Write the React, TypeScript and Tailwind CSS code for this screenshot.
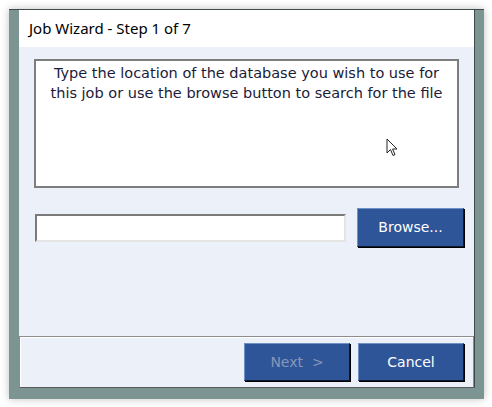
const font = { fontFamily: '"DejaVu Sans", Verdana, sans-serif' };

const BlueButton = ({ text, disabled }: { text: string; disabled?: boolean }) => (
  <button
    className={
      "h-[38px] w-[106px] bg-[#2e5597] border border-t-[#6f8fc7] border-l-[#6f8fc7] border-r-[#0d1a33] border-b-[#0d1a33] shadow-[1px_1px_0_#000] text-[14px] whitespace-pre " +
      (disabled ? "text-[#8797b8]" : "text-white")
    }
    style={font}
  >
    {text}
  </button>
);

const Cursor = () => (
  <svg width="13" height="20" viewBox="0 0 13 20" className="absolute left-[386px] top-[138px]">
    <path
      d="M1 1 L1 15 L4.5 11.5 L7 17.5 L9 16.6 L6.6 11 L11 11 Z"
      fill="#fff"
      stroke="#222"
      strokeWidth="1"
      strokeLinejoin="round"
    />
  </svg>
);

export default function App() {
  return (
    <div className="relative w-[492px] h-[407px] bg-white p-[9px]">
      <div className="w-[475px] h-[390px] flex flex-col bg-[#7c9593] border-t border-t-[#3f4a4a] pl-[10px] pr-[9px] pb-[11px] shadow-[0_0_8px_rgba(0,0,0,0.25)]">
        <div className="flex flex-col flex-1 border-r border-[#404848]">
          <div className="h-[37px] bg-white flex items-center pl-[10px] text-[15px] text-black" style={{ fontFamily: '"Noto Sans", "Open Sans", sans-serif' }}>
            Job Wizard - Step 1 of 7
          </div>
          <div className="flex-1 bg-[#ecf0f8] flex flex-col">
            <div className="mt-[12px] ml-[15px] w-[425px] h-[129px] bg-white border-2 border-[#7d7d7d] pt-[2px] text-center text-[14.5px] leading-[20px] text-[#1b1b3a]" style={font}>
              Type the location of the database you wish to use for
              <br />
              this job or use the browse button to search for the file
            </div>
            <div className="mt-[20px] ml-[16px] flex items-center gap-[11px]">
              <input
                className="w-[311px] h-[28px] bg-white border-2 border-t-[#7a7a7a] border-l-[#7a7a7a] border-r-[#e4e4e4] border-b-[#e4e4e4] outline-none"
                readOnly
              />
              <button
                className="h-[39px] w-[107px] bg-[#2e5597] border border-t-[#6f8fc7] border-l-[#6f8fc7] border-r-[#0d1a33] border-b-[#0d1a33] shadow-[1px_1px_0_#000] text-white text-[14px]"
                style={font}
              >
                Browse...
              </button>
            </div>
          </div>
          <div className="h-[52px] bg-[#ecf0f8] border border-t-[#8c8c8c] border-l-[#8c8c8c] border-r-[#8c8c8c] border-b-[#5a5a5a] shadow-[inset_1px_1px_0_#fff] flex items-center justify-end gap-[8px] pr-[9px]">
            <BlueButton text="Next  >" disabled />
            <BlueButton text="Cancel" />
          </div>
        </div>
      </div>
      <Cursor />
    </div>
  );
}
